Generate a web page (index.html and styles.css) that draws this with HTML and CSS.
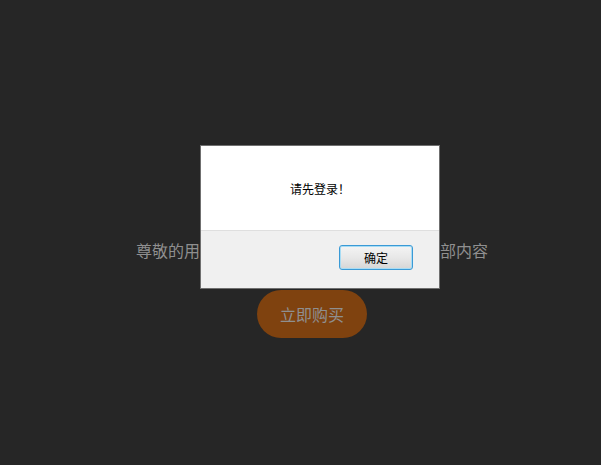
FILE: index.html
```html
<!DOCTYPE html>
<html lang="zh-CN">
<head>
  <meta charset="UTF-8" />
  <title>购买提示</title>
  <link rel="stylesheet" href="styles.css">
</head>
<body>
  <div class="page">
    <p class="notice">尊敬的用户，您需要购买课程后才能观看全部内容</p>
    <a href="#" class="buy-btn">立即购买</a>
  </div>

  <div class="dialog">
    <div class="dialog-body">请先登录！</div>
    <div class="dialog-footer">
      <button class="ok-btn">确定</button>
    </div>
  </div>
</body>
</html>
```

FILE: styles.css
```css
html, body {
  margin: 0;
  padding: 0;
  height: 100%;
  background-color: #262626;
  font-family: "Noto Sans CJK SC", "Noto Sans", sans-serif;
}

.page {
  display: flex;
  flex-direction: column;
  align-items: center;
  padding-top: 237px;
  padding-left: 23px;
}

.notice {
  margin: 0;
  font-size: 16px;
  line-height: 26px;
  color: #8f8f8f;
}

.buy-btn {
  margin-top: 27px;
  width: 110px;
  height: 48px;
  line-height: 48px;
  border-radius: 24px;
  background-color: #7f420f;
  color: #8f8f8f;
  font-size: 16px;
  text-align: center;
  text-decoration: none;
}

.dialog {
  position: absolute;
  left: 200px;
  top: 145px;
  width: 238px;
  border: 1px solid #6f6f6f;
  background: #fff;
  font-size: 12px;
  color: #000;
}

.dialog-body {
  height: 84px;
  display: flex;
  align-items: center;
  justify-content: center;
  border-bottom: 1px solid #dfdfdf;
}

.dialog-footer {
  height: 57px;
  background-color: #f0f0f0;
  display: flex;
  justify-content: flex-end;
  align-items: flex-start;
  padding-right: 26px;
}

.ok-btn {
  margin-top: 14px;
  width: 74px;
  height: 25px;
  padding: 0;
  border: 1px solid #3a9ad6;
  border-radius: 3px;
  background: linear-gradient(#f4f4f4, #e8e8e8 50%, #d6d6d6);
  box-shadow: inset 0 0 0 1px #a8dcf4;
  font-family: "Noto Sans CJK SC", sans-serif;
  font-size: 12px;
  color: #000;
}
```
